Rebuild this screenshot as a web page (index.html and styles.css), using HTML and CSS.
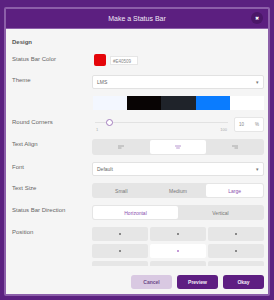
FILE: index.html
```html
<!DOCTYPE html>
<html lang="en">
<head>
  <meta charset="UTF-8" />
  <title>Make a Status Bar</title>
  <link rel="stylesheet" href="styles.css">
</head>
<body>
  <div class="modal">
    <div class="modal-head">
      <span class="title">Make a Status Bar</span>
      <span class="close">&#x2716;</span>
    </div>

    <div class="modal-body">
      <div class="heading">Design</div>

      <div class="row">
        <div class="label">Status Bar Color</div>
        <div class="color-pick">
          <span class="swatch"></span>
          <span class="hex">#E40509</span>
        </div>
      </div>

      <div class="row">
        <div class="label">Theme</div>
        <div class="select"><span>LMS</span><span class="caret">&#9662;</span></div>
      </div>

      <div class="row">
        <div class="label"></div>
        <div class="themes">
          <span class="t1"></span><span class="t2"></span><span class="t3"></span><span class="t4"></span><span class="t5"></span>
        </div>
      </div>

      <div class="row">
        <div class="label">Round Corners</div>
        <div class="range-row">
          <div class="slider">
            <div class="track"></div>
            <div class="thumb"></div>
            <span class="min">1</span>
            <span class="max">100</span>
          </div>
          <div class="num"><span>10</span><span>%</span></div>
        </div>
      </div>

      <div class="row">
        <div class="label">Text Align</div>
        <div class="seg seg-tall">
          <span class="opt"><svg width="6" height="4" viewBox="0 0 6 4"><path d="M0 1h6M0 3h3.5" stroke="#999" stroke-width="0.8"/></svg></span>
          <span class="opt on"><svg width="6" height="4" viewBox="0 0 6 4"><path d="M0 1h6M1.2 3h3.6" stroke="#a77fc4" stroke-width="0.8"/></svg></span>
          <span class="opt"><svg width="6" height="4" viewBox="0 0 6 4"><path d="M0 1h6M2.5 3h3.5" stroke="#999" stroke-width="0.8"/></svg></span>
        </div>
      </div>

      <div class="row">
        <div class="label">Font</div>
        <div class="select"><span>Default</span><span class="caret">&#9662;</span></div>
      </div>

      <div class="row">
        <div class="label">Text Size</div>
        <div class="seg">
          <span class="opt">Small</span>
          <span class="opt">Medium</span>
          <span class="opt on">Large</span>
        </div>
      </div>

      <div class="row">
        <div class="label">Status Bar Direction</div>
        <div class="seg">
          <span class="opt on">Horizontal</span>
          <span class="opt">Vertical</span>
        </div>
      </div>

      <div class="row">
        <div class="label">Position</div>
        <div class="grid">
          <span class="cell"><i></i></span><span class="cell"><i></i></span><span class="cell"><i></i></span>
          <span class="cell"><i></i></span><span class="cell on"><i></i></span><span class="cell"><i></i></span>
          <span class="cell"><i></i></span><span class="cell"><i></i></span><span class="cell"><i></i></span>
        </div>
      </div>
    </div>

    <div class="modal-foot">
      <button class="btn light">Cancel</button>
      <button class="btn">Preview</button>
      <button class="btn">Okay</button>
    </div>
  </div>
</body>
</html>
```

FILE: styles.css
```css
body { margin: 0; background: #5b2180; font-family: "Liberation Sans", Arial, sans-serif; height: 300px; overflow: hidden; }
.modal { margin: 7px 0 0 4px; width: 262px; height: 285px; border: 2px solid #8c5fa9; border-radius: 2px; background: #f5f5f5; display: flex; flex-direction: column; overflow: hidden; }
.modal-head { height: 19px; flex: none; background: #5c1f80; border-bottom: 1px solid #8c5fa9; display: flex; align-items: center; justify-content: center; position: relative; }
.title { color: #f1e9f6; font-size: 7px; }
.close { position: absolute; right: 5px; top: 3px; width: 12px; height: 12px; border-radius: 50%; background: #4b1768; color: #fff; font-size: 4.5px; display: flex; align-items: center; justify-content: center; }
.modal-body { height: 237px; flex: none; overflow: hidden; padding: 0 4px 0 6px; }
.heading { font-size: 6px; font-weight: bold; color: #555; margin: 10px 0 8px; height: 7px; line-height: 7px; }
.row { display: grid; grid-template-columns: 80px 1fr; margin-bottom: 7px; align-items: start; }
.label { font-size: 6px; color: #666; line-height: 7px; padding-top: 2px; }
.color-pick { display: flex; align-items: center; gap: 4px; height: 12px; padding-left: 2px; margin-bottom: 2px; }
.swatch { width: 12px; height: 12px; border-radius: 2px; background: #e40509; }
.hex { width: 28px; height: 9px; background: #fff; border: 1px solid #e6e6e6; font-size: 4.5px; color: #888; line-height: 9px; padding-left: 2px; box-sizing: border-box; }
.select { height: 14px; background: #fff; border: 1px solid #e2e2e2; border-radius: 2px; display: flex; align-items: center; justify-content: space-between; padding: 0 4px; font-size: 5px; color: #666; box-sizing: border-box; }
.caret { font-size: 5px; color: #777; }
.themes { display: flex; height: 14px; margin-left: 1px; }
.themes span { flex: 1; }
.t1 { background: #f3f7ff; }
.t2 { background: #080404; }
.t3 { background: #1f232a; }
.t4 { background: #0a7cff; }
.t5 { background: #fff; }
.range-row { display: flex; align-items: start; gap: 3px; }
.slider { flex: 1; height: 15px; position: relative; }
.track { position: absolute; left: 3px; right: 3px; top: 5px; height: 1px; background: #e2e2e2; }
.thumb { position: absolute; left: 14px; top: 2px; width: 5px; height: 5px; border: 1px solid #a27bbd; border-radius: 50%; background: #fff; }
.min, .max { position: absolute; top: 10px; font-size: 4px; color: #aaa; }
.min { left: 4px; }
.max { right: 4px; }
.num { width: 30px; height: 15px; background: #fff; border: 1px solid #e6e6e6; border-radius: 2px; display: flex; justify-content: space-between; align-items: center; padding: 0 4px; box-sizing: border-box; font-size: 4.5px; color: #888; }
.seg { display: flex; height: 15px; background: #e5e5e5; border-radius: 3px; padding: 1px; box-sizing: border-box; }
.seg-tall { height: 16px; }
.opt { flex: 1; display: flex; align-items: center; justify-content: center; font-size: 5px; color: #777; border-radius: 2px; }
.opt.on { background: #fff; color: #8b4fae; }
.grid { display: grid; grid-template-columns: repeat(3, 1fr); gap: 3px 2px; }
.cell { height: 14px; background: #e6e6e6; border-radius: 2px; display: flex; align-items: center; justify-content: center; }
.cell i { width: 1.5px; height: 1.5px; background: #888; }
.cell.on { background: #fff; }
.cell.on i { background: #c59ad8; }
.modal-foot { flex: 1; display: flex; justify-content: flex-end; align-items: start; gap: 5px; padding: 9px 4px 0 0; }
.btn { width: 41px; height: 14px; border: none; border-radius: 3px; background: #5e1e82; color: #f4ecf8; font-family: inherit; font-size: 5px; font-weight: bold; padding: 0; }
.btn.light { background: #d9c9e2; color: #6d4a88; }
```
